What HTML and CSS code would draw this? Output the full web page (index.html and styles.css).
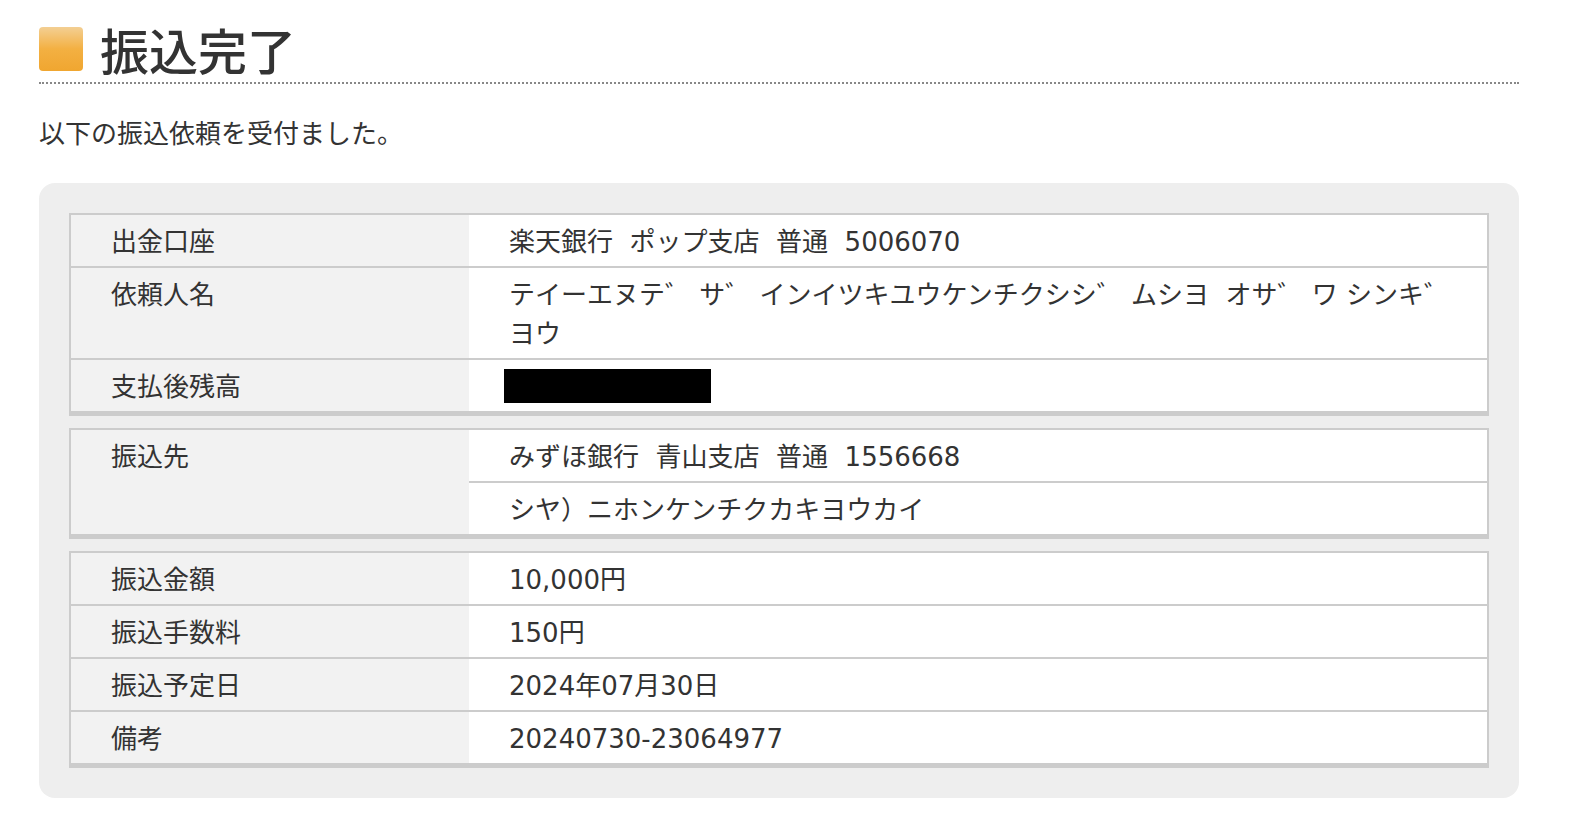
FILE: index.html
```html
<!DOCTYPE html>
<html lang="ja">
  <head>
    <meta charset="UTF-8" />
    <meta name="viewport" content="width=device-width, initial-scale=1.0" />
    <title>振込完了</title>
    <link rel="stylesheet" href="styles.css">
  </head>
  <body>
    <div class="page">
      <!-- Page Title -->
      <h1 class="title"><span class="title-mark"></span>振込完了</h1>

      <p class="lead">以下の振込依頼を受付ました。</p>

      <!-- Result Panel -->
      <div class="panel">
        <table class="detail">
          <tr>
            <td class="label">出金口座</td>
            <td class="value">楽天銀行&nbsp;&nbsp;ポップ支店&nbsp;&nbsp;普通&nbsp;&nbsp;5006070</td>
          </tr>
          <tr>
            <td class="label">依頼人名</td>
            <td class="value">テイーエヌテ゛ サ゛ インイツキユウケンチクシシ゛ ムシヨ&nbsp;&nbsp;オサ゛ ワ シンキ゛ヨウ</td>
          </tr>
          <tr>
            <td class="label">支払後残高</td>
            <td class="value"><span class="masked"></span></td>
          </tr>
        </table>

        <table class="detail">
          <tr>
            <td class="label" rowspan="2">振込先</td>
            <td class="value">みずほ銀行&nbsp;&nbsp;青山支店&nbsp;&nbsp;普通&nbsp;&nbsp;1556668</td>
          </tr>
          <tr>
            <td class="value">シヤ）ニホンケンチクカキヨウカイ</td>
          </tr>
        </table>

        <table class="detail">
          <tr>
            <td class="label">振込金額</td>
            <td class="value">10,000円</td>
          </tr>
          <tr>
            <td class="label">振込手数料</td>
            <td class="value">150円</td>
          </tr>
          <tr>
            <td class="label">振込予定日</td>
            <td class="value">2024年07月30日</td>
          </tr>
          <tr>
            <td class="label">備考</td>
            <td class="value">20240730-23064977</td>
          </tr>
        </table>
      </div>
    </div>
  </body>
</html>
```

FILE: styles.css
```css
/* Global Reset */
* {
  margin: 0;
  padding: 0;
  box-sizing: border-box;
}

body {
  font-family: "Noto Sans CJK JP", "Noto Sans", sans-serif;
  background-color: #fff;
  color: #333;
}

.page {
  width: 1480px;
  margin-left: 39px;
  padding-top: 19px;
}

/* Title */
.title {
  display: flex;
  align-items: center;
  gap: 17px;
  font-size: 49px;
  line-height: 60px;
  font-weight: 500;
  color: #333;
  padding-bottom: 3px;
  border-bottom: 2px dotted #888;
}

.title-mark {
  width: 44px;
  height: 44px;
  border-radius: 4px;
  background: linear-gradient(#f3cf93, #f3b042 50%, #f0a630);
}

.lead {
  margin-top: 29px;
  font-size: 26px;
  line-height: 38px;
}

/* Panel */
.panel {
  margin-top: 32px;
  padding: 30px;
  background-color: #eee;
  border-radius: 16px;
}

.detail {
  width: 100%;
  border-spacing: 0;
  border: 2px solid #ccc;
  border-bottom-width: 5px;
  font-size: 26px;
  line-height: 39px;
}

.detail + .detail {
  margin-top: 12px;
}

.detail td {
  vertical-align: top;
}

.detail tr + tr td {
  border-top: 2px solid #ccc;
}

.label {
  width: 398px;
  padding: 5px 40px 7px;
  background-color: #f2f2f2;
}

.value {
  padding: 8px 22px 4px 40px;
  font-family: "DejaVu Sans", "Noto Sans CJK JP", sans-serif;
  background-color: #fff;
}

.masked {
  display: block;
  width: 207px;
  height: 34px;
  margin: 1px 0 4px -5px;
  background-color: #000;
}
```
